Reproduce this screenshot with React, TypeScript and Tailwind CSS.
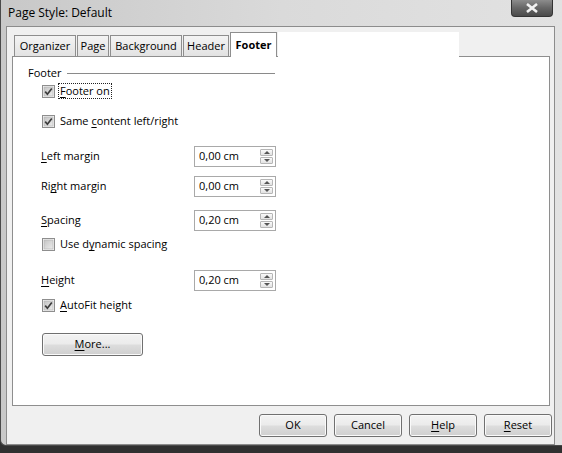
import type { ReactNode } from "react";

function Check({ on }: { on: boolean }) {
  return (
    <svg width="13" height="13" viewBox="0 0 13 13" className="shrink-0">
      <defs>
        <linearGradient id="cbg" x1="0" y1="0" x2="1" y2="1">
          <stop offset="0" stopColor="#c4c4c4" />
          <stop offset="1" stopColor="#ececec" />
        </linearGradient>
      </defs>
      <rect x="0.5" y="0.5" width="12" height="12" fill="#f4f4f4" stroke="#8e8e8e" />
      <rect x="2" y="2" width="9" height="9" fill="url(#cbg)" stroke="#b0b0b0" strokeWidth="0.6" />
      {on && <path d="M3.2 6.6 L5.4 9.2 L9.8 3.4" fill="none" stroke="#3c3c3c" strokeWidth="1.7" />}
    </svg>
  );
}

function U({ children }: { children: ReactNode }) {
  return <span className="underline underline-offset-2 [text-decoration-skip-ink:none]">{children}</span>;
}

function CheckRow({ on, children, focus }: { on: boolean; children: ReactNode; focus?: boolean }) {
  return (
    <div className="flex h-[20px] items-center pl-[29px]">
      <Check on={on} />
      <span className={focus ? "ml-[3px] border border-dotted border-[#222] px-[1px] leading-[14px]" : "ml-[5px]"}>
        {children}
      </span>
    </div>
  );
}

function Spin({ label, value }: { label: ReactNode; value: string }) {
  return (
    <div className="flex h-[20px] items-center pl-[28px]">
      <div className="w-[153px]">{label}</div>
      <div className="flex h-[21px] w-[82px] items-center justify-between border border-[#a9a9a9] bg-white pl-[4px] pr-[2px]">
        <span>{value}</span>
        <div className="flex flex-col gap-[1px]">
          <div className="flex h-[7px] w-[13px] items-center justify-center rounded-[1px] border border-[#b6b6b6] bg-gradient-to-b from-[#fafafa] to-[#e2e2e2]">
            <div className="h-0 w-0 border-x-[3px] border-b-[3px] border-x-transparent border-b-[#555]" />
          </div>
          <div className="flex h-[7px] w-[13px] items-center justify-center rounded-[1px] border border-[#b6b6b6] bg-gradient-to-b from-[#fafafa] to-[#e2e2e2]">
            <div className="h-0 w-0 border-x-[3px] border-t-[3px] border-x-transparent border-t-[#555]" />
          </div>
        </div>
      </div>
    </div>
  );
}

function Btn({ children, w }: { children: ReactNode; w: string }) {
  return (
    <div
      className={`${w} flex h-[23px] items-center justify-center rounded-[3px] border border-[#707070] bg-[linear-gradient(#f3f3f3_0%,#ebebeb_48%,#dddddd_52%,#cfcfcf_100%)] shadow-[inset_0_0_0_1px_#fafafa]`}
    >
      {children}
    </div>
  );
}

const tabs = [
  { t: "Organizer", w: "w-[62px]" },
  { t: "Page", w: "w-[32px]" },
  { t: "Background", w: "w-[72px]" },
  { t: "Header", w: "w-[46px]" },
];

export default function App() {
  return (
    <div
      className="flex h-[453px] w-[562px] flex-col overflow-hidden bg-[#303030] text-[11px] text-black"
      style={{ fontFamily: '"Open Sans", "Noto Sans", sans-serif' }}
    >
      <div className="relative flex h-[446px] w-[562px] flex-col rounded-bl-[6px] border-b border-l border-[#4a4a4a] bg-gradient-to-r from-[#c8c8c8] via-[#dadada] to-[#e2e2e2]">
        {/* title */}
        <div className="flex h-[26px] items-center pl-[7px] text-[12px]">Page Style: Default</div>
        <div className="absolute right-[9px] top-0 flex h-[17px] w-[42px] items-center justify-center rounded-b-[4px] border border-t-0 border-[#333] bg-gradient-to-b from-[#8c8c8c] via-[#666] to-[#4a4a4a]">
          <svg width="14" height="10" viewBox="0 0 14 10">
            <path d="M2 1 L12 9 M12 1 L2 9" stroke="#f2f2f2" strokeWidth="2.6" />
          </svg>
        </div>

        {/* client */}
        <div className="ml-[5px] mr-[7px] flex flex-1 flex-col border border-[#8c8c8c] bg-[#f0f0f0]">
          <div className="pl-[5px] pt-[4px]">
            <div className="flex h-[25px] items-end pl-[2px]">
              {tabs.map(({ t, w }) => (
                <div
                  key={t}
                  className={`${w} mr-[1px] flex h-[21px] items-center justify-center border border-b-0 border-[#8e8e8e] bg-gradient-to-b from-[#f4f4f4] to-[#e2e2e2]`}
                >
                  {t}
                </div>
              ))}
              <div className="relative z-10 -mb-px flex h-[25px] w-[47px] items-center justify-center border border-b-0 border-[#8e8e8e] bg-white font-bold">
                Footer
              </div>
              <div className="relative z-10 -mb-px ml-[1px] h-[25px] w-[181px] bg-white" />
            </div>

            {/* panel */}
            <div className="h-[350px] w-[538px] border border-[#8e8e8e] bg-white">
              <div className="mt-[8px] flex h-[16px] items-center pl-[15px]">
                <span>Footer</span>
                <div className="ml-[5px] h-px w-[208px] bg-[#8a8a8a]" />
              </div>
              <CheckRow on focus>
                <U>F</U>ooter on
              </CheckRow>
              <div className="mt-[10px]">
                <CheckRow on>
                  Same <U>c</U>ontent left/right
                </CheckRow>
              </div>
              <div className="mt-[15px]">
                <Spin label={<><U>L</U>eft margin</>} value="0,00 cm" />
              </div>
              <div className="mt-[10px]">
                <Spin label={<>Ri<U>g</U>ht margin</>} value="0,00 cm" />
              </div>
              <div className="mt-[14px]">
                <Spin label={<><U>S</U>pacing</>} value="0,20 cm" />
              </div>
              <div className="mt-[4px]">
                <CheckRow on={false}>
                  Use d<U>y</U>namic spacing
                </CheckRow>
              </div>
              <div className="mt-[16px]">
                <Spin label={<><U>H</U>eight</>} value="0,20 cm" />
              </div>
              <div className="mt-[5px]">
                <CheckRow on>
                  <U>A</U>utoFit height
                </CheckRow>
              </div>
              <div className="mt-[18px] pl-[29px]">
                <Btn w="w-[101px]">
                  <span>
                    <U>M</U>ore...
                  </span>
                </Btn>
              </div>
            </div>
          </div>

          {/* buttons */}
          <div className="mt-[8px] flex justify-end gap-[7px] pr-[2px]">
            <Btn w="w-[68px]">OK</Btn>
            <Btn w="w-[68px]">Cancel</Btn>
            <Btn w="w-[68px]">
              <span>
                <U>H</U>elp
              </span>
            </Btn>
            <Btn w="w-[68px]">
              <span>
                <U>R</U>eset
              </span>
            </Btn>
          </div>
        </div>
      </div>
    </div>
  );
}
